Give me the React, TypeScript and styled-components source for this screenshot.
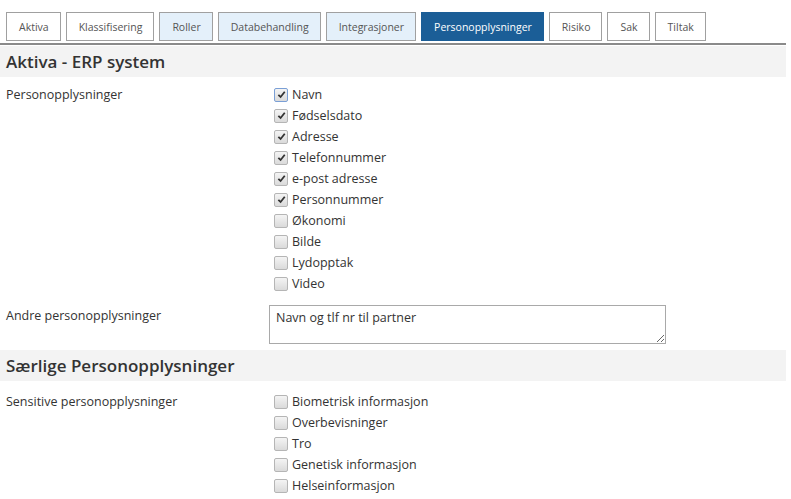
import React, { useState } from "react";
import styled, { createGlobalStyle } from "styled-components";

const GlobalStyle = createGlobalStyle`
  body {
    margin: 0;
    background: #fff;
    font-family: "Open Sans", "Noto Sans", sans-serif;
    color: #333;
  }
`;

const Page = styled.div`
  width: 786px;
  padding-top: 12px;
`;

const TabBar = styled.div`
  display: flex;
  gap: 5px;
  padding-left: 6px;
  border-bottom: 2px solid #8a8a8a;
  padding-bottom: 2px;
`;

const Tab = styled.div<{ $variant: "plain" | "soft" | "active" }>`
  height: 27px;
  padding: 0 11px 0 12px;
  display: flex;
  align-items: center;
  font-size: 10.5px;
  border: 1px solid
    ${(p) => (p.$variant === "active" ? "#1b5e97" : "#a0a0a0")};
  background: ${(p) =>
    p.$variant === "active" ? "#1b5e97" : p.$variant === "soft" ? "#e4f0fa" : "#fff"};
  color: ${(p) => (p.$variant === "active" ? "#fff" : "#555")};
`;

const SectionTitle = styled.h2<{ $gap: number }>`
  margin: ${(p) => p.$gap}px 0 0;
  height: 31px;
  background: #f3f3f3;
  padding-left: 6px;
  display: flex;
  align-items: center;
  font-size: 17px;
  font-weight: 600;
  color: #333;
`;

const Row = styled.div<{ $gap: number }>`
  display: grid;
  grid-template-columns: 263px 1fr;
  padding-left: 6px;
  margin-top: ${(p) => p.$gap}px;
`;

const Label = styled.div`
  font-size: 12.5px;
  color: #333;
  padding-top: 2px;
`;

const CheckList = styled.div`
  display: flex;
  flex-direction: column;
  padding-left: 5px;
`;

const CheckRow = styled.label`
  height: 21px;
  display: flex;
  align-items: center;
  gap: 4px;
  font-size: 12.5px;
  color: #333;
`;

const Box = styled.span<{ $focus?: boolean }>`
  width: 12px;
  height: 12px;
  border-radius: 2px;
  border: 1px solid ${(p) => (p.$focus ? "#7a9fd6" : "#b5b5b5")};
  background: linear-gradient(#f4f4f4, #dadada);
  display: flex;
  align-items: center;
  justify-content: center;
`;

const TextArea = styled.textarea`
  width: 397px;
  height: 39px;
  box-sizing: border-box;
  border: 1px solid #a9a9a9;
  padding: 3px 6px;
  font-family: inherit;
  font-size: 12.5px;
  color: #333;
  resize: both;
  margin: 0;
  display: block;
`;

const Tick = () => (
  <svg width="9" height="9" viewBox="0 0 10 10">
    <path d="M1.5 5.4 L4 7.8 L8.6 2" stroke="#333" strokeWidth="2" fill="none" />
  </svg>
);

function Check({ label, checked, focus }: { label: string; checked?: boolean; focus?: boolean }) {
  return (
    <CheckRow>
      <Box $focus={focus}>{checked && <Tick />}</Box>
      {label}
    </CheckRow>
  );
}

const tabs: { name: string; variant: "plain" | "soft" | "active" }[] = [
  { name: "Aktiva", variant: "plain" },
  { name: "Klassifisering", variant: "plain" },
  { name: "Roller", variant: "soft" },
  { name: "Databehandling", variant: "soft" },
  { name: "Integrasjoner", variant: "soft" },
  { name: "Personopplysninger", variant: "active" },
  { name: "Risiko", variant: "plain" },
  { name: "Sak", variant: "plain" },
  { name: "Tiltak", variant: "plain" },
];

const personal = [
  ["Navn", true],
  ["Fødselsdato", true],
  ["Adresse", true],
  ["Telefonnummer", true],
  ["e-post adresse", true],
  ["Personnummer", true],
  ["Økonomi", false],
  ["Bilde", false],
  ["Lydopptak", false],
  ["Video", false],
] as const;

const sensitive = [
  "Biometrisk informasjon",
  "Overbevisninger",
  "Tro",
  "Genetisk informasjon",
  "Helseinformasjon",
];

export default function App() {
  const [other, setOther] = useState("Navn og tlf nr til partner");
  return (
    <Page>
      <GlobalStyle />
      <TabBar>
        {tabs.map((t) => (
          <Tab key={t.name} $variant={t.variant}>
            {t.name}
          </Tab>
        ))}
      </TabBar>
      <SectionTitle $gap={1}>Aktiva - ERP system</SectionTitle>
      <Row $gap={7}>
        <Label>Personopplysninger</Label>
        <CheckList>
          {personal.map(([name, checked], i) => (
            <Check key={name} label={name} checked={checked} focus={i === 0} />
          ))}
        </CheckList>
      </Row>
      <Row $gap={11}>
        <Label>Andre personopplysninger</Label>
        <TextArea value={other} onChange={(e) => setOther(e.target.value)} />
      </Row>
      <SectionTitle $gap={6}>Særlige Personopplysninger</SectionTitle>
      <Row $gap={10}>
        <Label>Sensitive personopplysninger</Label>
        <CheckList>
          {sensitive.map((name) => (
            <Check key={name} label={name} />
          ))}
        </CheckList>
      </Row>
    </Page>
  );
}
